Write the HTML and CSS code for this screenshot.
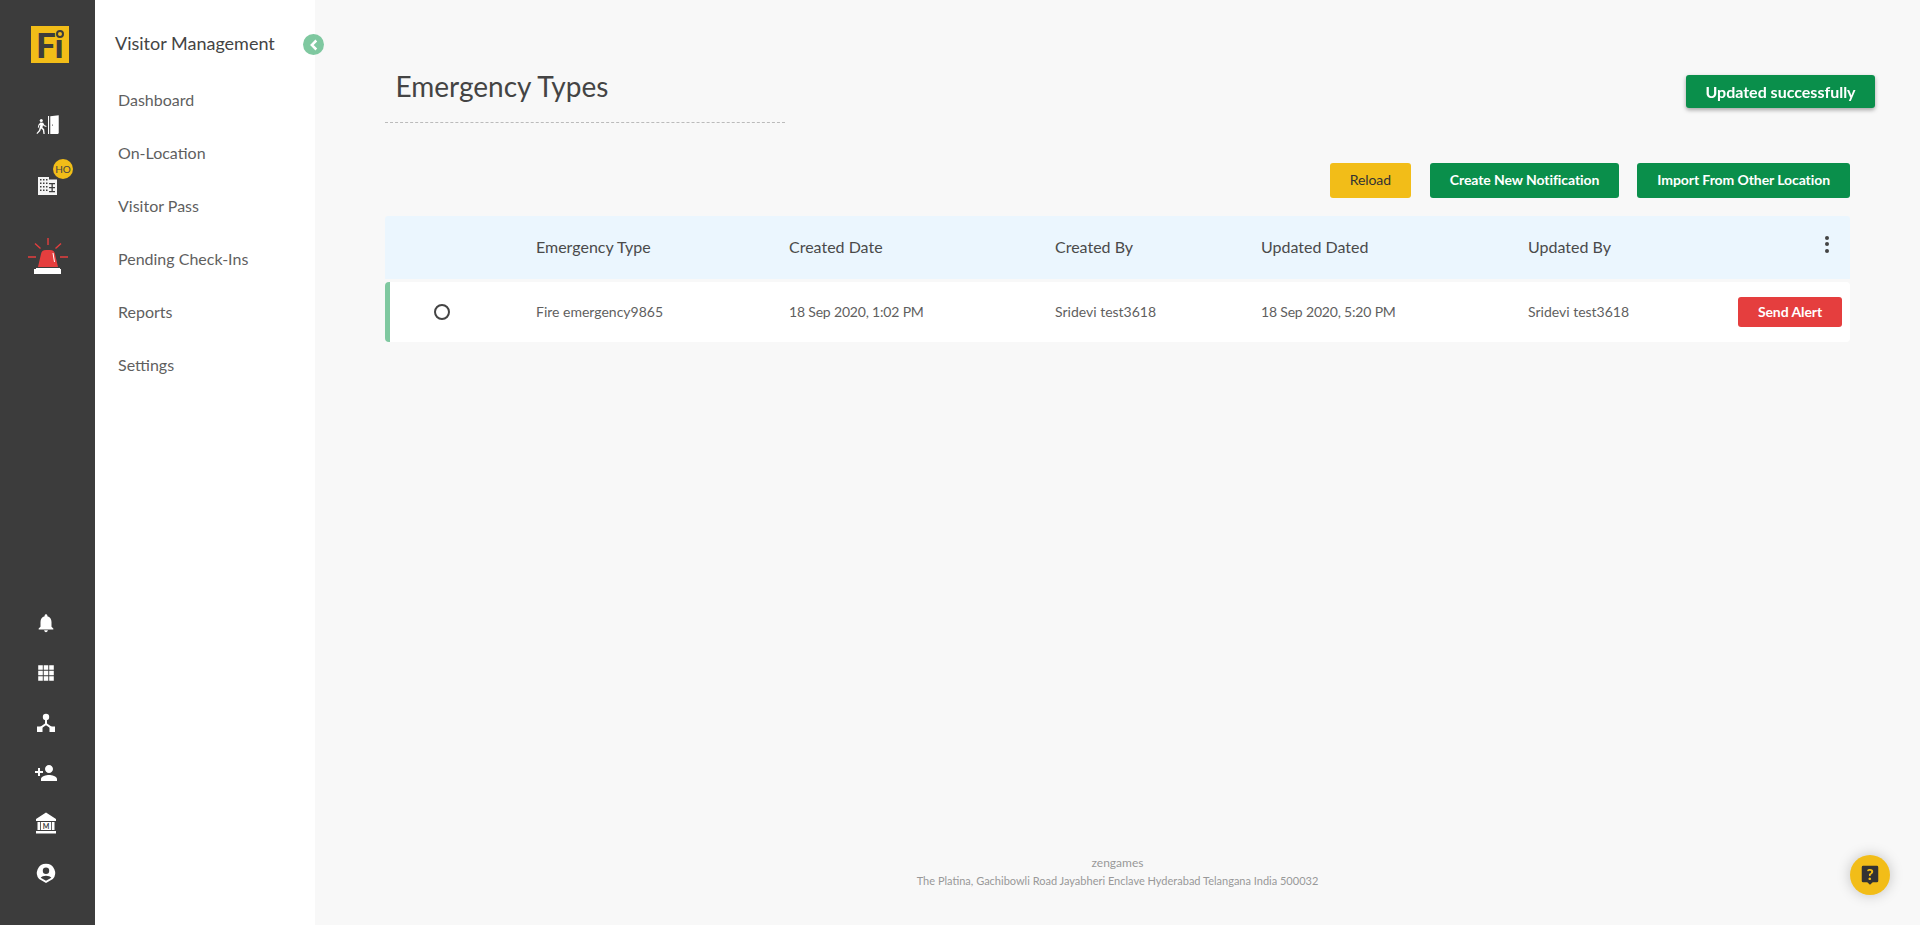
FILE: index.html
```html
<!DOCTYPE html>
<html lang="en">
<head>
    <meta charset="UTF-8">
    <title>Emergency Types - Visitor Management</title>
    <link rel="stylesheet" href="styles.css">
</head>
<body>
    <div class="app">
        <!-- Dark icon rail -->
        <aside class="rail">
            <div class="logo"><span class="logo-text">Fı</span><span class="logo-ring"></span></div>

            <div class="rail-top">
                <svg class="icon-door" viewBox="0 0 26 22" fill="#fff">
                    <circle cx="5.6" cy="6" r="1.7"/>
                    <path d="M4.6 8.2l3 .4 1.6 2.6 2.2.8-.4 1.1-2.8-1-.7-1-.6 2.6 1.9 2.1.6 5.1H8l-.7-4.3-1.9-1.8-1 2.7-3.2 3.4-.9-.9 2.8-3.1 1.5-6.1-1.2.7-.5 2.4-1.1-.2.7-3.1z"/>
                    <path d="M13 1h1.2v20H13z"/>
                    <path d="M15.5 1.4L24.8 0.4V20.2l-1 .8h-8.3zM17.4 10.4v1.4h.8v-1.4z" fill-rule="evenodd"/>
                </svg>

                <div class="building">
                    <svg class="icon-building" viewBox="0 0 19 18">
                        <path d="M0 0h11v2.500h8V18H0z" fill="#f4f4f4"/>
                        <path d="M2 2h1.500v1.500H2zM5 2h1.500v1.500H5zM8 2h1.500v1.500H8zM2 5.500h1.500V7H2zM5 5.500h1.500V7H5zM8 5.500h1.500V7H8zM2 9h1.500v1.500H2zM5 9h1.500v1.500H5zM8 9h1.500v1.500H8zM2 12.500h1.500V14H2zM5 12.500h1.500V14H5zM8 12.500h1.500V14H8zM11 6h6v1.300h-6zM11 10h6v1.300h-6zM11 14h6v1.300h-6zM13.500 6h1.300v9.300h-1.300z" fill="#3c3c3c"/>
                    </svg>
                    <span class="badge">HO</span>
                </div>

                <svg class="icon-alarm" viewBox="0 0 40 37">
                    <g stroke="#e53e3e" stroke-width="1.400" fill="none">
                        <path d="M20 0v7M7 5.500l5.500 5M33 5.500l-5.500 5M0 19h8M32 19h8"/>
                    </g>
                    <path d="M10 29l3-13c.5-2.500 2-4 5-4h4c3 0 4.500 1.500 5 4l3 13z" fill="#e53e3e"/>
                    <path d="M25 15l1.500 9" stroke="#fff" stroke-width="1" fill="none"/>
                    <path d="M7 31h1v-1h24v1h1v5H6v-5z" fill="#fff"/>
                </svg>
            </div>

            <div class="rail-bottom">
                <svg class="rail-icon" viewBox="0 0 24 24"><path d="M12 22c1.100 0 2-.9 2-2h-4c0 1.100.89 2 2 2zm6-6v-5c0-3.070-1.640-5.640-4.500-6.320V4c0-.83-.67-1.500-1.500-1.500s-1.500.67-1.500 1.500v.68C7.630 5.360 6 7.920 6 11v5l-2 2v1h16v-1l-2-2z"/></svg>
                <svg class="rail-icon" viewBox="0 0 24 24"><path d="M4 4h5v5H4zM10 4h5v5h-5zM16 4h5v5h-5zM4 10h5v5H4zM10 10h5v5h-5zM16 10h5v5h-5zM4 16h5v5H4zM10 16h5v5h-5zM16 16h5v5h-5z" transform="translate(-.5 -.5)"/></svg>
                <svg class="rail-icon" viewBox="1 1 22 22"><circle cx="12" cy="6" r="3.200"/><path d="M11 8h2v4.500l5 3.500-1.200 1.600-4.800-3.400-4.800 3.400L6 16l5-3.500z"/><path d="M3 15.500h5.500V21H3zM15.500 15.500H21V21h-5.500z"/></svg>
                <svg class="rail-icon" viewBox="1 1 22 22"><path d="M15 12c2.210 0 4-1.790 4-4s-1.790-4-4-4-4 1.790-4 4 1.790 4 4 4zm-9-2V7H4v3H1v2h3v3h2v-3h3v-2H6zm9 4c-2.670 0-8 1.340-8 4v2h16v-2c0-2.660-5.330-4-8-4z"/></svg>
                <svg class="rail-icon" viewBox="1 1 22 22">
                    <path d="M12 1.500L22 8v2H2V8zM3.500 11H6v8H3.500zM18 11h2.500v8H18zM6.800 11h10.400v8H6.800zM2 20h20v2.500H2z"/>
                    <text class="bank-letter" x="12" y="17.500">M</text>
                </svg>
                <svg class="rail-icon" viewBox="0 0 24 24"><path d="M12 2a10 10 0 0 1 7.500 16.600L12 23l-7.500-4.400A10 10 0 0 1 12 2zm0 4a3.500 3.500 0 1 0 0 7 3.500 3.500 0 0 0 0-7zm0 9c-2.500 0-5 .9-5.800 2.200L12 20.500l5.800-3.300C17 15.900 14.500 15 12 15z" fill-rule="evenodd"/></svg>
            </div>
        </aside>

        <!-- Section menu -->
        <nav class="sidebar">
            <h3 class="sidebar-title">Visitor Management</h3>
            <a class="nav-item">Dashboard</a>
            <a class="nav-item">On-Location</a>
            <a class="nav-item">Visitor Pass</a>
            <a class="nav-item">Pending Check-Ins</a>
            <a class="nav-item">Reports</a>
            <a class="nav-item">Settings</a>
            <span class="collapse">
                <svg viewBox="0 0 8 10" width="9" height="12"><path d="M6.500 1L2.500 5l4 4" fill="none" stroke="#fff" stroke-width="2.200"/></svg>
            </span>
        </nav>

        <main class="main">
            <div class="page-head">
                <h1 class="page-title">Emergency Types</h1>
            </div>

            <div class="actions">
                <button class="btn btn-yellow">Reload</button>
                <button class="btn btn-green">Create New Notification</button>
                <button class="btn btn-green">Import From Other Location</button>
            </div>

            <div class="table">
                <div class="table-head">
                    <div></div>
                    <div>Emergency Type</div>
                    <div>Created Date</div>
                    <div>Created By</div>
                    <div>Updated Dated</div>
                    <div>Updated By</div>
                    <div class="kebab"><i></i><i></i><i></i></div>
                </div>
                <div class="table-row">
                    <div class="cell-radio"><span class="radio"></span></div>
                    <div>Fire emergency9865</div>
                    <div class="cell-date">18 Sep 2020, 1:02 PM</div>
                    <div>Sridevi test3618</div>
                    <div class="cell-date">18 Sep 2020, 5:20 PM</div>
                    <div>Sridevi test3618</div>
                    <div class="cell-action"><button class="btn btn-red">Send Alert</button></div>
                </div>
            </div>

            <footer class="footer">
                <div>zengames</div>
                <div class="footer-address">The Platina, Gachibowli Road Jayabheri Enclave Hyderabad Telangana India 500032</div>
            </footer>
        </main>
    </div>

    <div class="toast">Updated successfully</div>

    <button class="help">
        <svg viewBox="0 0 24 24" width="22" height="22">
            <path d="M4.500 2h15A1.500 1.500 0 0 1 21 3.500v15a1.500 1.500 0 0 1-1.500 1.500H15l-3 2.500L9 20H4.500A1.500 1.500 0 0 1 3 18.500v-15A1.500 1.500 0 0 1 4.500 2z" fill="#333"/>
            <text class="help-mark" x="12" y="17">?</text>
        </svg>
    </button>
</body>
</html>
```

FILE: styles.css
```css
/* General */
* {
    box-sizing: border-box;
}

html, body {
    height: 100%;
}

body {
    margin: 0;
    background: #f8f8f8;
    font-family: 'Lato', sans-serif;
    color: #444;
    overflow: hidden;
}

.app {
    display: flex;
    height: 100vh;
}

/* Icon rail */
.rail {
    width: 95px;
    flex-shrink: 0;
    background: #3c3c3c;
    display: flex;
    flex-direction: column;
    align-items: center;
    padding: 26px 0 41px;
}

.logo {
    position: relative;
    width: 38px;
    height: 37px;
    margin-left: 5px;
    padding-left: 5px;
    background: #f2bd18;
    color: #3c3c3c;
}

.logo-text {
    display: block;
    font-size: 35px;
    font-weight: 900;
    line-height: 37px;
}

.logo-ring {
    position: absolute;
    top: 4px;
    right: 5px;
    width: 8px;
    height: 8px;
    border: 2px solid #3c3c3c;
    border-radius: 50%;
}

.rail-top {
    display: flex;
    flex-direction: column;
    align-items: center;
    margin-top: 52px;
}

.icon-door {
    width: 24px;
    height: 20px;
}

.building {
    position: relative;
    margin-top: 42px;
    height: 18px;
}

.icon-building {
    display: block;
    width: 19px;
    height: 18px;
}

.badge {
    position: absolute;
    top: -18px;
    left: 15px;
    width: 20px;
    height: 20px;
    border-radius: 50%;
    background: #f2bd18;
    color: #444;
    font-size: 10px;
    line-height: 20px;
    text-align: center;
}

.icon-alarm {
    width: 40px;
    height: 37px;
    margin-top: 43px;
}

.rail-bottom {
    margin-top: auto;
    margin-right: 3px;
    display: flex;
    flex-direction: column;
    align-items: center;
    gap: 28px;
}

.rail-icon {
    display: block;
    width: 22px;
    height: 22px;
    fill: #fff;
}

.bank-letter {
    font-family: 'Lato', sans-serif;
    font-size: 7px;
    font-weight: 700;
    fill: #3c3c3c;
    text-anchor: middle;
}

/* Sidebar */
.sidebar {
    position: relative;
    width: 220px;
    flex-shrink: 0;
    background: #fff;
    padding: 32px 0 0 23px;
}

.sidebar-title {
    margin: 0 0 19px -3px;
    font-size: 18px;
    font-weight: 400;
    line-height: 22px;
    color: #444;
}

.nav-item {
    display: block;
    height: 53px;
    font-size: 16px;
    line-height: 53px;
    color: #5f5f5f;
}

.collapse {
    position: absolute;
    top: 34px;
    right: -9px;
    width: 21px;
    height: 21px;
    border-radius: 50%;
    background: #7fc8a0;
    display: flex;
    align-items: center;
    justify-content: center;
}

/* Main */
.main {
    flex: 1;
    display: flex;
    flex-direction: column;
    padding: 0 70px 35px;
}

.page-head {
    width: 400px;
    height: 123px;
    padding: 64px 0 0 10.500px;
    border-bottom: 1px dashed #bbb;
}

.page-title {
    margin: 0;
    font-size: 28px;
    font-weight: 400;
    line-height: 44px;
    color: #444;
}

.actions {
    display: flex;
    justify-content: flex-end;
    gap: 18px;
    margin-top: 40px;
}

.btn {
    height: 35px;
    padding: 0 20px 2px;
    border: none;
    border-radius: 3px;
    font-family: 'Lato', sans-serif;
    font-size: 14px;
    letter-spacing: -0.08px;
    cursor: pointer;
}

.btn-yellow {
    background: #f2bd18;
    color: #333;
    width: 81px;
    padding: 0 0 2px;
    margin-right: 1px;
}

.btn-green {
    background: #0a8f4b;
    color: #fff;
    font-weight: 700;
}

.btn-red {
    background: #e53e3e;
    color: #fff;
    font-weight: 700;
    width: 104px;
    height: 30px;
    padding: 0 0 2px;
}

/* Table */
.table {
    margin-top: 18px;
}

.table-head, .table-row {
    display: grid;
    align-items: center;
}

.table-head {
    grid-template-columns: 151px 253px 266px 206px 267px 1fr 112px;
    height: 63px;
    padding-bottom: 2px;
    background: #ebf6fe;
    font-size: 16px;
    color: #4a4a4a;
    border-radius: 3px 3px 0 0;
}

.table-row {
    grid-template-columns: 146px 253px 266px 206px 267px 1fr 112px;
    height: 60px;
    margin-top: 3px;
    padding-bottom: 2px;
    background: #fff;
    border-left: 5px solid #7fc8a0;
    border-radius: 4px;
    font-size: 14px;
    color: #5f5f5f;
}

.cell-date {
    letter-spacing: -0.18px;
}

.cell-radio {
    display: flex;
    padding-left: 44px;
    margin-top: 2px;
}

.radio {
    display: block;
    width: 16px;
    height: 16px;
    border: 2px solid #444;
    border-radius: 50%;
}

.cell-action {
    display: flex;
    justify-content: flex-end;
    padding-right: 8px;
    margin-top: 2px;
}

.kebab {
    display: flex;
    flex-direction: column;
    gap: 2.500px;
    margin-top: -5px;
    padding-left: 87px;
}

.kebab i {
    display: block;
    width: 4px;
    height: 4px;
    border-radius: 50%;
    background: #444;
}

/* Footer */
.footer {
    margin-top: auto;
    text-align: center;
    font-size: 12px;
    line-height: 18px;
    color: #999;
}

.footer-address {
    font-size: 11px;
}

/* Overlays */
.toast {
    position: fixed;
    top: 75px;
    right: 45px;
    width: 189px;
    height: 33px;
    background: #0a8f4b;
    border-radius: 3px;
    box-shadow: 0 2px 4px rgba(0, 0, 0, 0.35);
    color: #fff;
    font-size: 16px;
    font-weight: 700;
    line-height: 33px;
    text-align: center;
}

.help {
    position: fixed;
    right: 30px;
    bottom: 30px;
    width: 40px;
    height: 40px;
    padding: 0;
    border: none;
    border-radius: 50%;
    background: #f2bd18;
    box-shadow: 0 0 14px rgba(0, 0, 0, 0.22);
    display: flex;
    align-items: center;
    justify-content: center;
}

.help-mark {
    font-family: 'Lato', sans-serif;
    font-size: 17px;
    font-weight: 900;
    fill: #f2bd18;
    text-anchor: middle;
}
```
